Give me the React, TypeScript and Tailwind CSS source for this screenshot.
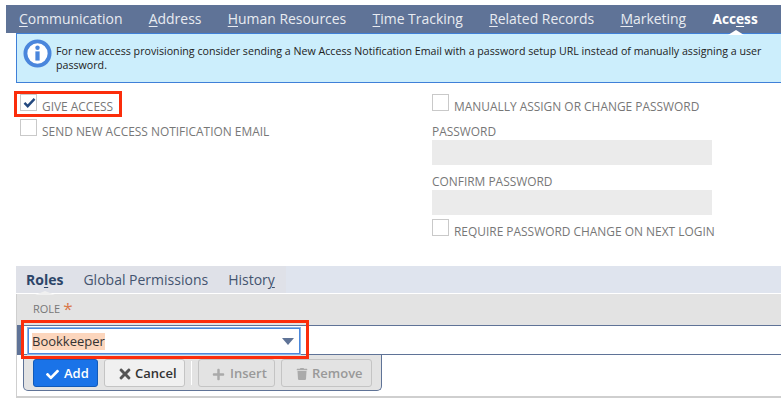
import { FaCheck, FaTimes, FaPlus, FaTrash } from 'react-icons/fa';

const tabs = [
  { first: 'C', rest: 'ommunication' },
  { first: 'A', rest: 'ddress' },
  { first: 'H', rest: 'uman Resources' },
  { first: 'T', rest: 'ime Tracking' },
  { first: 'R', rest: 'elated Records' },
  { first: 'M', rest: 'arketing' },
];

const Box = ({ checked }: { checked?: boolean }) => (
  <span className="relative w-[17px] h-[17px] border border-[#c9c9c9] bg-white shrink-0 block">
    {checked && (
      <svg viewBox="0 0 14 12" className="absolute left-[2px] top-[2px] w-[13px] h-[11px]">
        <path d="M1.5 6.5 L5 10 L12.5 2" fill="none" stroke="#24497f" strokeWidth="2.6" />
      </svg>
    )}
  </span>
);

const CheckRow = ({ label, checked }: { label: string; checked?: boolean }) => (
  <div className="flex items-start h-[25px]">
    <Box checked={checked} />
    <span className="ml-[5px] mt-[4px] text-[11.93px] leading-[17px] text-[#777] whitespace-nowrap">{label}</span>
  </div>
);

const Field = ({ label }: { label: string }) => (
  <div className="flex flex-col">
    <div className="h-[21px] pt-[3px] text-[11.93px] leading-[18px] text-[#777]">{label}</div>
    <div className="w-[280px] h-[25px] bg-[#ebebeb]" />
  </div>
);

export default function App() {
  return (
    <div className="relative w-[781px] h-[405px] bg-white overflow-hidden font-['Open_Sans',sans-serif]">
      {/* Main tabs */}
      <div className="pt-[5px] pl-[6px]">
        <div className="h-[28px] bg-[#5f7397] flex items-center pl-[13px] pt-px text-[13.95px] text-[#e8ebf1] gap-[26.3px]">
          {tabs.map(t => (
            <span key={t.first} className="whitespace-nowrap">
              <span className="underline underline-offset-2">{t.first}</span>
              {t.rest}
            </span>
          ))}
          <span className="relative font-bold text-[13.7px] text-white">
            Acc<span className="underline underline-offset-2">e</span>ss
            <span className="absolute left-[16px] -bottom-[5px] w-0 h-0 border-x-[8px] border-x-transparent border-b-[5px] border-b-white" />
          </span>
        </div>
      </div>

      {/* Info banner */}
      <div className="ml-[16px] h-[50px] bg-[#cceefc] border-l border-t border-b border-[#3f80d8] flex">
        <svg viewBox="0 0 30 30" className="w-[29px] h-[29px] ml-[6px] mt-[5px] shrink-0">
          <circle cx="15" cy="15" r="12.5" fill="#fff" stroke="#4a86dc" strokeWidth="4" />
          <circle cx="15" cy="9" r="2.3" fill="#4a86dc" />
          <rect x="12.8" y="12.8" width="4.4" height="9.5" fill="#4a86dc" />
        </svg>
        <p className="ml-[4px] mt-[10px] w-[720px] text-[10.67px] leading-[14px] text-[#222]">
          For new access provisioning consider sending a New Access Notification Email with a password setup URL instead of manually assigning a user password.
        </p>
      </div>

      {/* Access options */}
      <div className="flex h-[183px] pt-[11px]">
        <div className="w-[432px] pl-[20px]">
          <CheckRow label="GIVE ACCESS" checked />
          <CheckRow label="SEND NEW ACCESS NOTIFICATION EMAIL" />
        </div>
        <div className="flex flex-col">
          <CheckRow label="MANUALLY ASSIGN OR CHANGE PASSWORD" />
          <Field label="PASSWORD" />
          <div className="h-[4px]" />
          <Field label="CONFIRM PASSWORD" />
          <div className="h-[4px]" />
          <CheckRow label="REQUIRE PASSWORD CHANGE ON NEXT LOGIN" />
        </div>
      </div>

      {/* Sublist */}
      <div className="ml-[16px]">
        <div className="h-[27px] bg-[#dfe4ee]">
          <div className="w-[270px] h-full bg-[#dfe1e8] flex items-center pl-[10px] gap-[20px] text-[14px] text-[#44546f]">
            <span className="relative font-bold text-[#2d4569]">
              Ro<span className="underline underline-offset-2">l</span>es
              <span className="absolute left-[9px] -bottom-[5px] w-0 h-0 border-x-[10px] border-x-transparent border-b-[4px] border-b-[#f0f0f0]" />
            </span>
            <span>Global Permissions</span>
            <span>
              Histor<span className="underline underline-offset-2">y</span>
            </span>
          </div>
        </div>
        <div className="h-[104px] border-l border-b-2 border-[#cfcfcf] mt-px">
          <div className="h-[31px] bg-[#e3e3e3] flex items-center pl-[16px] text-[11px] text-[#777]">
            ROLE
            <span className="ml-[3px] -mt-[2px] text-[17px] leading-none text-[#d9784a]">*</span>
          </div>
          <div className="h-[30px] bg-white border-y border-l-[4px] border-[#5f7397] pl-[6px] flex items-start">
            <div className="w-[274px] h-[28px] mt-px border border-[#8ab6e8] shadow-[inset_0_0_0_1px_#4a88dc] flex items-center pl-[4px] pr-[6px] justify-between">
              <span className="bg-[#fcd6bd] text-[13px] leading-[17px] text-[#333]">Bookkeeper</span>
              <span className="w-0 h-0 border-x-[6px] border-x-transparent border-t-[7px] border-t-[#5f7397]" />
            </div>
          </div>
          <div className="ml-[6px] w-[359px] h-[36px] bg-[#e3e3e3] border border-t-0 border-[#5f7397] rounded-b-[5px] flex items-start pt-[4px] pl-[9px] gap-[6px]">
            <button className="h-[28px] w-[65px] pl-[12px] pt-[2px] flex items-center gap-[5px] rounded-[3px] bg-[#1a73e8] border border-[#125ab8] text-[13px] font-semibold text-white">
              <FaCheck size={13} />
              Add
            </button>
            <button className="h-[28px] w-[81px] pl-[12px] pt-[2px] flex items-center gap-[2px] rounded-[3px] bg-[#f0f0f0] border border-[#c4c4c4] text-[13px] font-semibold text-[#333]">
              <FaTimes size={16} className="text-[#555]" />
              Cancel
            </button>
            <div className="w-px h-[24px] bg-white mt-[2px]" />
            <button className="h-[28px] w-[77px] pl-[13px] pt-[2px] flex items-center gap-[5px] rounded-[3px] bg-[#e3e3e3] border border-[#c4c4c4] text-[13px] font-semibold text-[#999]">
              <FaPlus size={13} className="text-[#aaa]" />
              Insert
            </button>
            <button className="h-[28px] w-[91px] pl-[14px] pt-[2px] flex items-center gap-[4px] rounded-[3px] bg-[#e3e3e3] border border-[#c4c4c4] text-[13px] font-semibold text-[#999]">
              <FaTrash size={12} className="text-[#aaa]" />
              Remove
            </button>
          </div>
        </div>
      </div>

      {/* Red highlight boxes */}
      <div className="absolute left-[14px] top-[91px] w-[108px] h-[26px] border-[3px] border-[#fb2d0b]" />
      <div className="absolute left-[21px] top-[320px] w-[288px] h-[39px] border-[3px] border-[#fb2d0b]" />
    </div>
  );
}
